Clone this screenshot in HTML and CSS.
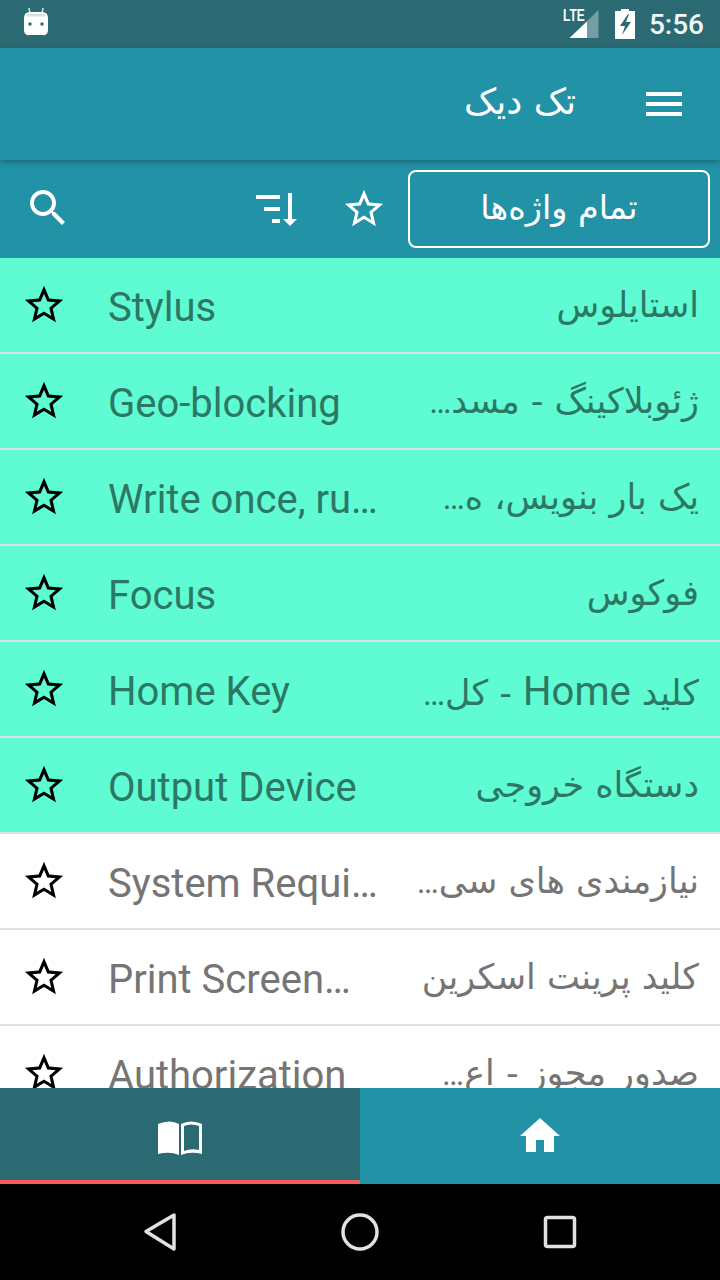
FILE: index.html
```html
<!DOCTYPE html>
<html lang="fa">
  <head>
    <meta charset="UTF-8" />
    <meta name="viewport" content="width=device-width, initial-scale=1.0" />
    <title>تک دیک</title>
    <link rel="stylesheet" href="styles.css">
  </head>
  <body>
    <svg class="defs" width="0" height="0">
      <symbol id="star" viewBox="0 0 24 24">
        <path d="M22 9.24l-7.19-.62L12 2 9.19 8.63 2 9.24l5.46 4.73L5.82 21 12 17.27 18.18 21l-1.63-7.03L22 9.24zM12 15.4l-3.76 2.27 1-4.28-3.32-2.88 4.38-.38L12 6.1l1.71 4.04 4.38.38-3.32 2.88 1 4.28L12 15.4z" />
      </symbol>
    </svg>

    <div class="app">
      <div class="status-bar">
        <svg class="android" width="24" height="28" viewBox="0 0 24 28">
          <path d="M5 0l1 6M19 0l-1 6" stroke="#d5e2e3" stroke-width="1.5" fill="none" />
          <path d="M6 4h12q6 0 6 6v12q0 6-6 5H6q-6 1-6-5V10q0-6 6-6z" fill="#fff" />
          <path d="M3 6h18v2.500H3z" fill="#d5e2e3" />
          <circle cx="6" cy="16" r="1.700" fill="#2b6a73" />
          <circle cx="18" cy="16" r="1.700" fill="#2b6a73" />
        </svg>
        <div class="status-right">
          <div class="signal">
            <span class="lte">LTE</span>
            <svg width="30" height="29" viewBox="0 0 30 29">
              <path d="M29.500 0v28H.5z" fill="#fff" fill-opacity=".35" />
              <path d="M18 11.500V28H.5z" fill="#fff" />
            </svg>
          </div>
          <svg class="battery" width="20" height="30" viewBox="0 0 20 30">
            <path d="M6 0h8v2h6v28H0V2h6z" fill="#fff" />
            <path d="M13 5L5 17h5l-3 9 9-13h-5l3-8z" fill="#2b6a73" />
          </svg>
          <span class="clock">5:56</span>
        </div>
      </div>

      <header class="toolbar">
        <h1 class="title">تک دیک</h1>
        <svg class="menu" width="36" height="24" viewBox="0 0 36 24">
          <path d="M0 0h36v4H0zM0 10h36v4H0zM0 20h36v4H0z" fill="#fff" />
        </svg>
      </header>

      <div class="filter-bar">
        <svg class="search" width="48" height="48" viewBox="0 0 24 24">
          <path d="M15.500 14h-.79l-.28-.27C15.410 12.590 16 11.110 16 9.500 16 5.910 13.090 3 9.500 3S3 5.910 3 9.500 5.910 16 9.500 16c1.610 0 3.090-.59 4.230-1.570l.27.28v.79l5 4.990L20.490 19l-4.990-5zm-6 0C7.010 14 5 11.990 5 9.500S7.010 5 9.500 5 14 7.010 14 9.500 11.990 14 9.500 14z" fill="#fff" />
        </svg>
        <svg class="sort" width="42" height="34" viewBox="0 0 42 34">
          <path d="M0 2h24v4H0zM8 14h16v4H8zM16 26h8v4h-8zM32 0h4v26h5l-7 7-7-7h5z" fill="#fff" />
        </svg>
        <svg class="icon-star light"><use href="#star" /></svg>
        <button class="all-words">تمام واژه‌ها</button>
      </div>

      <div class="word-list">
        <div class="word seen">
          <svg class="icon-star"><use href="#star" /></svg>
          <span class="en">Stylus</span>
          <span class="fa">استایلوس</span>
        </div>
        <div class="word seen">
          <svg class="icon-star"><use href="#star" /></svg>
          <span class="en">Geo-blocking</span>
          <span class="fa">ژئوبلاکینگ - مسد<span class="dots">…</span></span>
        </div>
        <div class="word seen">
          <svg class="icon-star"><use href="#star" /></svg>
          <span class="en">Write once, ru…</span>
          <span class="fa">یک بار بنویس، ه<span class="dots">…</span></span>
        </div>
        <div class="word seen">
          <svg class="icon-star"><use href="#star" /></svg>
          <span class="en">Focus</span>
          <span class="fa">فوکوس</span>
        </div>
        <div class="word seen">
          <svg class="icon-star"><use href="#star" /></svg>
          <span class="en">Home Key</span>
          <span class="fa mixed">کلید <span class="latin">Home</span> - کل<span class="dots">…</span></span>
        </div>
        <div class="word seen">
          <svg class="icon-star"><use href="#star" /></svg>
          <span class="en">Output Device</span>
          <span class="fa">دستگاه خروجی</span>
        </div>
        <div class="word">
          <svg class="icon-star"><use href="#star" /></svg>
          <span class="en">System Requi…</span>
          <span class="fa">نیازمندی های سی<span class="dots">…</span></span>
        </div>
        <div class="word">
          <svg class="icon-star"><use href="#star" /></svg>
          <span class="en">Print Screen…</span>
          <span class="fa">کلید پرینت اسکرین</span>
        </div>
        <div class="word">
          <svg class="icon-star"><use href="#star" /></svg>
          <span class="en">Authorization</span>
          <span class="fa">صدور مجوز - اع<span class="dots">…</span></span>
        </div>
      </div>

      <nav class="tabs">
        <div class="tab active">
          <svg width="44" height="34" viewBox="0 0 44 34">
            <path d="M0 3q12-5 21 0v31q-9-4-21-1z" fill="#fff" />
            <path d="M23 3q10-5 21 0v30q-11-3-21 1zM26 5v25q7-3 15-1V5q-8-3-15 0z" fill="#fff" fill-rule="evenodd" />
          </svg>
        </div>
        <div class="tab">
          <svg width="40" height="34" viewBox="0 0 40 34">
            <path d="M20 0l20 18h-6v16H24V22h-8v12H6V18H0z" fill="#fff" />
          </svg>
        </div>
      </nav>

      <div class="nav-bar">
        <svg width="34" height="40" viewBox="0 0 34 40">
          <path d="M3 19.500L31 3v34z" fill="none" stroke="#e2e2e2" stroke-width="3.500" stroke-linejoin="round" />
        </svg>
        <svg width="38" height="38" viewBox="0 0 38 38">
          <circle cx="19" cy="19" r="17" fill="none" stroke="#e2e2e2" stroke-width="3.500" />
        </svg>
        <svg width="34" height="34" viewBox="0 0 34 34">
          <rect x="2.500" y="2.500" width="29" height="29" rx="2" fill="none" stroke="#e2e2e2" stroke-width="3.500" />
        </svg>
      </div>
    </div>
  </body>
</html>
```

FILE: styles.css
```css
body {
  margin: 0;
  font-family: Roboto, "DejaVu Sans", sans-serif;
  background-color: #000;
}

.defs {
  display: block;
  height: 0;
}

.app {
  display: flex;
  flex-direction: column;
  width: 720px;
  height: 1280px;
  overflow: hidden;
}

.status-bar {
  display: flex;
  flex: none;
  align-items: center;
  justify-content: space-between;
  height: 48px;
  padding: 0 16px 0 24px;
  box-sizing: border-box;
  background-color: #2b6a73;
}

.android {
  margin-top: -4px;
}

.status-right {
  display: flex;
  align-items: center;
}

.signal {
  position: relative;
  display: flex;
  width: 30px;
  margin-right: 16px;
}

.lte {
  position: absolute;
  top: -2px;
  left: -6px;
  font-family: "Liberation Sans", sans-serif;
  font-size: 16px;
  font-weight: 700;
  line-height: 16px;
  color: #fff;
  transform: scaleX(0.75);
  transform-origin: left center;
}

.battery {
  margin-right: 14px;
}

.clock {
  font-size: 28px;
  font-weight: 500;
  color: #f2f6f6;
}

.toolbar {
  position: relative;
  z-index: 1;
  display: flex;
  flex: none;
  align-items: center;
  justify-content: flex-end;
  height: 112px;
  padding-right: 38px;
  box-sizing: border-box;
  background-color: #2292a7;
  box-shadow: 0 2px 6px rgba(0, 0, 0, 0.3);
}

.title {
  margin: 0 70px 6px 0;
  font-family: "DejaVu Sans", sans-serif;
  font-size: 36px;
  font-weight: 400;
  color: #fff;
}

.filter-bar {
  display: flex;
  flex: none;
  align-items: center;
  height: 98px;
  padding: 0 10px 0 24px;
  box-sizing: border-box;
  background-color: #2292a7;
}

.search {
  flex: none;
  margin-top: -2px;
}

.sort {
  flex: none;
  margin: 2px 0 0 184px;
}

.icon-star {
  flex: none;
  width: 46px;
  height: 46px;
  fill: #000;
}

.icon-star.light {
  margin: 0 0 0 43px;
  fill: #fff;
}

.all-words {
  flex: none;
  width: 302px;
  height: 78px;
  margin: 0 0 0 21px;
  padding: 0 0 4px;
  font-family: "DejaVu Sans", sans-serif;
  font-size: 33.5px;
  color: #fff;
  background: none;
  border: 2px solid #fff;
  border-radius: 8px;
}

.word-list {
  flex: 1;
  min-height: 0;
  overflow: hidden;
  background-color: #fff;
}

.word {
  display: flex;
  align-items: center;
  height: 96px;
  padding: 0 21px;
  box-sizing: border-box;
  border-bottom: 2px solid #e0e0e0;
  color: #757575;
  background-color: #fff;
}

.word.seen {
  color: #2c7864;
  background-color: #5ffbd2;
}

.en {
  flex: none;
  width: 300px;
  margin-left: 41px;
  padding-top: 5px;
  font-size: 40px;
  white-space: nowrap;
}

.fa {
  flex: 1;
  font-family: "DejaVu Sans", sans-serif;
  font-size: 35px;
  direction: rtl;
  white-space: nowrap;
}

.fa.mixed {
  padding-top: 5px;
}

.latin {
  font-family: Roboto, sans-serif;
  font-size: 40px;
}

.dots {
  font-family: Roboto, sans-serif;
  font-size: 33px;
}

.tabs {
  display: flex;
  flex: none;
  height: 96px;
}

.tab {
  display: flex;
  flex: 1;
  align-items: center;
  justify-content: center;
  padding: 0 0 2px;
  box-sizing: border-box;
  background-color: #2292a7;
}

.tab.active {
  padding: 8px 0 0;
  background-color: #2b6a73;
  border-bottom: 4px solid #f95a5a;
}

.nav-bar {
  display: flex;
  flex: none;
  align-items: center;
  justify-content: space-between;
  height: 96px;
  padding: 0 143px;
  box-sizing: border-box;
  background-color: #000;
}
```
